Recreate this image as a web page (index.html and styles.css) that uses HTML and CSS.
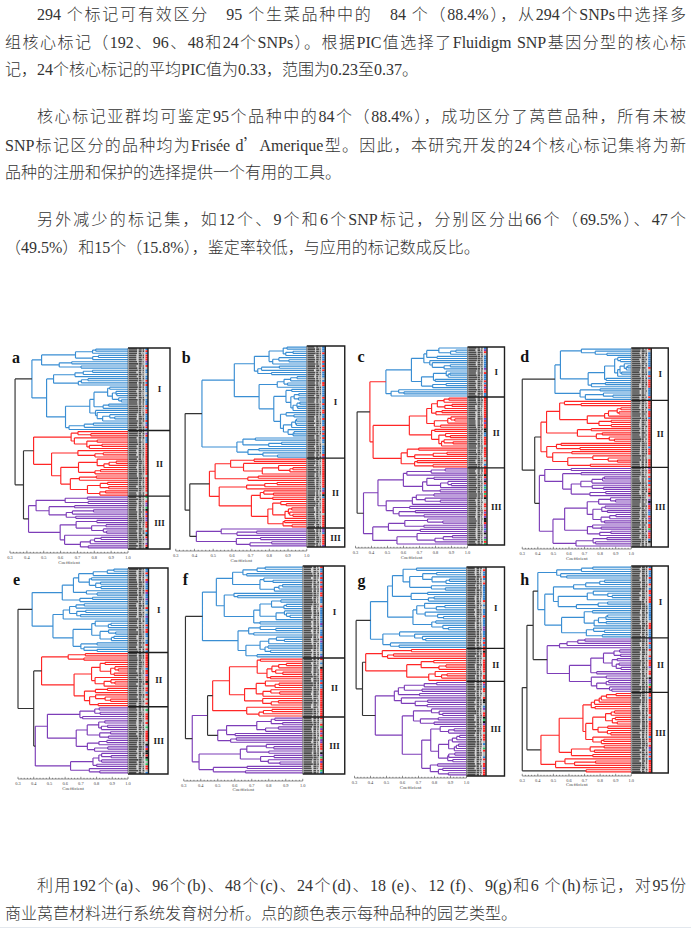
FILE: index.html
```html
<!DOCTYPE html>
<html lang="zh-CN">
<head>
<meta charset="utf-8">
<title>核心标记</title>
<link rel="stylesheet" href="styles.css">
</head>
<body>
<div class="article">
  <p>
    <span class="ln first">294 个标记可有效区分&nbsp;&nbsp; 95 个生菜品种中的&nbsp;&nbsp; 84 个（88.4%），从294个SNPs中选择多</span>
    <span class="ln">组核心标记（192、96、48和24个SNPs）。根据PIC值选择了Fluidigm SNP基因分型的核心标</span>
    <span class="ln last">记，24个核心标记的平均PIC值为0.33，范围为0.23至0.37。</span>
  </p>
  <p>
    <span class="ln first">核心标记亚群均可鉴定95个品种中的84个（88.4%），成功区分了莴苣品种，所有未被</span>
    <span class="ln">SNP标记区分的品种均为Frisée d<span class="cjk">’</span>Amerique型。因此，本研究开发的24个核心标记集将为新</span>
    <span class="ln last">品种的注册和保护的选择提供一个有用的工具。</span>
  </p>
  <p>
    <span class="ln first">另外减少的标记集，如12个、9个和6个SNP标记，分别区分出66个（69.5%）、47个</span>
    <span class="ln last">（49.5%）和15个（15.8%），鉴定率较低，与应用的标记数成反比。</span>
  </p>
  <div class="figure">
    <svg class="panel" data-p="a" viewBox="5 340 170.25 225"></svg>
    <svg class="panel" data-p="b" viewBox="175.25 340 170.25 225"></svg>
    <svg class="panel" data-p="c" viewBox="345.5 340 170.25 225"></svg>
    <svg class="panel" data-p="d" viewBox="515.75 340 170.25 225"></svg>
    <svg class="panel" data-p="e" viewBox="5 565 170.25 230"></svg>
    <svg class="panel" data-p="f" viewBox="175.25 565 170.25 230"></svg>
    <svg class="panel" data-p="g" viewBox="345.5 565 170.25 230"></svg>
    <svg class="panel" data-p="h" viewBox="515.75 565 170.25 230"></svg>
  </div>
  <p class="caption">
    <span class="ln first">利用192个(a)、96个(b)、48个(c)、24个(d)、18 (e)、12 (f)、9(g)和6 个(h)标记，对95份</span>
    <span class="ln last">商业莴苣材料进行系统发育树分析。点的颜色表示每种品种的园艺类型。</span>
  </p>
</div>
<script src="script.js"></script>
</body>
</html>
```

FILE: styles.css
```css
html, body {
  margin: 0;
  padding: 0;
  background: #ffffff;
}

body {
  font-family: "Liberation Serif", "Noto Sans CJK SC", serif;
  font-size: 16px;
  font-weight: 300;
  color: #333333;
}

.article {
  width: 681px;
  padding: 1.25px 5px 0;
  border-bottom: 1px solid #e3e8ee;
}

.article p {
  margin: 0 0 19.5px;
  line-height: 27.5px;
}

.article p.caption {
  margin-bottom: 0;
}

.ln {
  display: block;
  text-align: justify;
  text-align-last: justify;
  text-indent: 0;
}

.ln.first {
  text-indent: 2em;
}

.ln.last {
  text-align-last: left;
}

.cjk {
  font-family: "Noto Sans CJK SC", sans-serif;
}

.figure {
  display: grid;
  grid-template-columns: repeat(4, 1fr);
  grid-template-rows: 225px 230px;
  margin: 79.75px 0 76.25px;
}

.panel {
  display: block;
  width: 100%;
  height: 100%;
  overflow: visible;
}

.plabel {
  font-family: "Liberation Serif", serif;
  font-weight: bold;
  font-size: 16px;
  fill: #111111;
}

.roman {
  font-family: "Liberation Serif", serif;
  font-weight: bold;
  font-size: 9px;
  fill: #222222;
}

.tick {
  font-family: "Liberation Serif", serif;
  font-size: 4.4px;
  fill: #444444;
}

.coef {
  font-family: "Liberation Serif", serif;
  font-size: 4.8px;
  fill: #444444;
}
```

FILE: script.js
```js
(function () {
  var NS = 'http://www.w3.org/2000/svg';
  var C = { b: '#3a8ed3', r: '#ff2626', p: '#7d3db8', k: '#333333' };
  var seed = 20231;
  function rnd() { seed = (seed * 16807) % 2147483647; return (seed - 1) / 2147483646; }
  function G(n, c, col) { return { n: n, c: c, col: col }; }
  function N(c, col, kids) { return { c: c, col: col, kids: kids }; }

  var P = {
    a: { lx: 12, ly: 362, ax0: 10, ax1: 128, lab0: 128, lab1: 145, cc: 145.4, bl: 148, br: 170, top: 347, bot: 548, ay: 552, cy: 563,
         counts: [39, 31, 25], tints: ['b', 'r', 'p'],
         tree: N(.33, 'k', [G(39, .43, 'b'), N(.38, 'k', [G(31, .44, 'r'), G(25, .41, 'p')])]) },
    b: { lx: 182, ly: 362, ax0: 176, ax1: 307, lab0: 307, lab1: 322, cc: 322.4, bl: 325.5, br: 345, top: 345, bot: 546, ay: 550, cy: 561,
         counts: [53, 33, 9], tints: ['b', 'r', 'p'],
         tree: N(.35, 'k', [G(53, .44, 'b'), N(.375, 'k', [G(33, .48, 'r'), G(9, .41, 'p')])]) },
    c: { lx: 357, ly: 361, ax0: 355, ax1: 467, lab0: 467, lab1: 483, cc: 483.4, bl: 486.5, br: 504, top: 346, bot: 544, ay: 547, cy: 558,
         counts: [24, 34, 37], tints: ['b', 'r', 'p'],
         tree: N(.31, 'k', [N(.39, 'r', [G(24, .49, 'b'), G(34, .41, 'r')]), G(37, .35, 'p')]) },
    d: { lx: 520, ly: 361, ax0: 522, ax1: 631, lab0: 631, lab1: 647.5, cc: 647.9, bl: 651, br: 668, top: 347, bot: 546, ay: 548, cy: 559,
         counts: [25, 32, 38], tints: ['b', 'r', 'p'],
         tree: N(.3, 'k', [G(25, .51, 'b'), N(.38, 'k', [G(32, .42, 'r'), G(38, .41, 'p')])]) },
    e: { lx: 13, ly: 584, ax0: 18, ax1: 128, lab0: 128, lab1: 145, cc: 145.4, bl: 148.5, br: 168, top: 567, bot: 773, ay: 778, cy: 789,
         counts: [39, 25, 31], tints: ['b', 'r', 'p'],
         tree: N(.3, 'k', [G(39, .39, 'b'), N(.4, 'k', [G(25, .45, 'r'), G(31, .41, 'p')])]) },
    f: { lx: 183, ly: 584, ax0: 184, ax1: 303, lab0: 303, lab1: 320, cc: 320.4, bl: 323.5, br: 345, top: 565, bot: 773, ay: 780, cy: 790,
         counts: [42, 27, 26], tints: ['b', 'r', 'p'],
         tree: N(.31, 'k', [G(42, .41, 'b'), N(.35, 'p', [N(.44, 'k', [G(27, .47, 'r'), G(12, .5, 'p')]), G(14, .39, 'p')])]) },
    g: { lx: 357, ly: 585, ax0: 354, ax1: 466, lab0: 466, lab1: 482, cc: 482.4, bl: 485.5, br: 504, top: 566, bot: 775, ay: 777, cy: 788,
         counts: [37, 15, 43], tints: ['b', 'r', 'p'],
         tree: N(.31, 'k', [G(37, .4, 'b'), N(.35, 'k', [G(15, .37, 'r'), G(43, .43, 'p')])]) },
    h: { lx: 520, ly: 584, ax0: 522, ax1: 631, lab0: 631, lab1: 648, cc: 648.4, bl: 651.5, br: 668, top: 565, bot: 772, ay: 775, cy: 785,
         counts: [33, 25, 37], tints: ['b', 'p', 'r'],
         tree: N(.3, 'k', [N(.33, 'k', [N(.37, 'k', [G(33, .4, 'b'), G(25, .46, 'p')]), G(35, .42, 'r')]), G(2, .71, 'r')]) }
  };

  var DOTS = {
    b: [['#2f7fd0', .62], ['#ff2222', .26], ['#b5b5b5', .07], ['#7d3db8', .05]],
    r: [['#ff2222', .74], ['#2f7fd0', .1], ['#b5b5b5', .08], ['#111111', .05], ['#7d3db8', .03]],
    p: [['#ff2222', .42], ['#b5b5b5', .2], ['#7d3db8', .16], ['#2f7fd0', .1], ['#111111', .07], ['#2cc060', .05]]
  };

  function el(svg, name, attrs, text) {
    var e = document.createElementNS(NS, name);
    for (var k in attrs) e.setAttribute(k, attrs[k]);
    if (text) e.textContent = text;
    svg.appendChild(e);
    return e;
  }
  function f(v) { return (Math.round(v * 100) / 100).toString(); }

  function pick(list) {
    var r = rnd(), s = 0;
    for (var i = 0; i < list.length; i++) { s += list[i][1]; if (r <= s) return list[i][0]; }
    return list[0][0];
  }

  function draw(svg, p) {
    var sp = (p.bot - p.top) / 95;
    function X(c) { return p.ax0 + (c - 0.3) / 0.7 * (p.ax1 - p.ax0); }
    function leafY(i) { return p.top + (i + 0.5) * sp; }
    var paths = {}, order = [];
    function line(col, d) { if (!paths[col]) { paths[col] = ''; order.push(col); } paths[col] += d; }
    function finish(x, kids, col) {
      line(col, 'M' + f(x) + ' ' + f(kids[0].y) + 'V' + f(kids[kids.length - 1].y));
      kids.forEach(function (k) { line(col, 'M' + f(x) + ' ' + f(k.y) + 'H' + f(k.x)); });
    }
    function sub(lo, hi, c, col) {
      if (hi - lo === 1) return { y: leafY(lo), x: p.lab0 };
      var n = hi - lo;
      var k = lo + Math.max(1, Math.min(n - 1, Math.round(n * (0.15 + rnd() * 0.7))));
      var x = X(c);
      var kids = [[lo, k], [k, hi]].map(function (r) {
        if (r[1] - r[0] === 1) return { y: leafY(r[0]), x: p.lab0 };
        var cc = c + (1 - c) * (0.05 + rnd() * 0.36);
        return sub(r[0], r[1], cc, col);
      });
      finish(x, kids, col);
      return { y: (kids[0].y + kids[1].y) / 2, x: x };
    }
    var next = 0;
    function node(t) {
      if (t.n) { var lo = next; next += t.n; return sub(lo, next, t.c, C[t.col]); }
      var kids = t.kids.map(node);
      var x = X(t.c);
      finish(x, kids, C[t.col]);
      return { y: (kids[0].y + kids[kids.length - 1].y) / 2, x: x };
    }
    node(p.tree);
    order.forEach(function (col) {
      el(svg, 'path', { d: paths[col], stroke: col, 'stroke-width': 1.15, fill: 'none' });
    });

    /* label column texture */
    var w = p.lab1 - p.lab0;
    el(svg, 'rect', { x: p.lab0, y: p.top, width: w, height: p.bot - p.top, fill: '#d6d6d6' });
    var d = '';
    for (var i = 0; i < 95; i++) {
      var y = p.top + i * sp + sp * 0.12, h = sp * 0.76;
      var segs = [[0.05, 0.48 + rnd() * 0.12], [0.63, 0.76 + rnd() * 0.06], [0.86, 0.9 + rnd() * 0.06]];
      segs.forEach(function (s) {
        d += 'M' + f(p.lab0 + w * s[0]) + ' ' + f(y) + 'h' + f(w * (s[1] - s[0])) + 'v' + f(h) + 'h' + f(-w * (s[1] - s[0])) + 'z';
      });
    }
    el(svg, 'path', { d: d, fill: '#4a4a4a' });

    /* coloured dots */
    var idx = 0;
    p.counts.forEach(function (n, ci) {
      for (var j = 0; j < n; j++, idx++) {
        el(svg, 'rect', { x: p.cc, y: f(p.top + idx * sp + sp * 0.05), width: 2.6, height: f(sp * 0.9), fill: pick(DOTS[p.tints[ci]]) });
      }
    });

    /* bracket box */
    var bd = 'M' + p.lab0 + ' ' + p.top + 'H' + p.br + 'V' + p.bot + 'H' + p.lab0 +
             'M' + p.bl + ' ' + p.top + 'V' + p.bot;
    var acc = 0, starts = [p.top];
    for (var q = 0; q < 2; q++) {
      acc += p.counts[q];
      var yy = p.top + acc * sp;
      starts.push(yy);
      bd += 'M' + p.lab0 + ' ' + f(yy) + 'H' + p.br;
    }
    starts.push(p.bot);
    el(svg, 'path', { d: bd, stroke: '#1e1e1e', 'stroke-width': 1.4, fill: 'none' });
    el(svg, 'path', { d: 'M' + p.lab0 + ' ' + p.top + 'V' + p.bot, stroke: '#444', 'stroke-width': 0.6, fill: 'none' });
    ['I', 'II', 'III'].forEach(function (t, k) {
      el(svg, 'text', { x: f((p.bl + p.br) / 2 + 0.5), y: f((starts[k] + starts[k + 1]) / 2 + 3.2), 'text-anchor': 'middle', 'class': 'roman' }, t);
    });

    /* axis */
    var ad = 'M' + p.ax0 + ' ' + p.ay + 'H' + p.ax1;
    for (var t = 0; t <= 35; t++) {
      var tx = X(0.3 + t * 0.02);
      ad += 'M' + f(tx) + ' ' + p.ay + 'v' + (t % 5 === 0 ? -2.2 : -1.2);
      if (t % 5 === 0) {
        el(svg, 'text', { x: f(tx), y: p.ay + 5.5, 'text-anchor': 'middle', 'class': 'tick' }, (0.3 + t * 0.02).toFixed(1));
      }
    }
    el(svg, 'path', { d: ad, stroke: '#444', 'stroke-width': 0.6, fill: 'none' });
    el(svg, 'text', { x: f((p.ax0 + p.ax1) / 2), y: p.cy, 'text-anchor': 'middle', 'class': 'coef' }, 'Coefficient');

    /* panel letter */
    el(svg, 'text', { x: p.lx, y: p.ly, 'class': 'plabel' }, svg.getAttribute('data-p'));
  }

  var svgs = document.querySelectorAll('svg.panel');
  for (var s = 0; s < svgs.length; s++) {
    draw(svgs[s], P[svgs[s].getAttribute('data-p')]);
  }
})();
```
